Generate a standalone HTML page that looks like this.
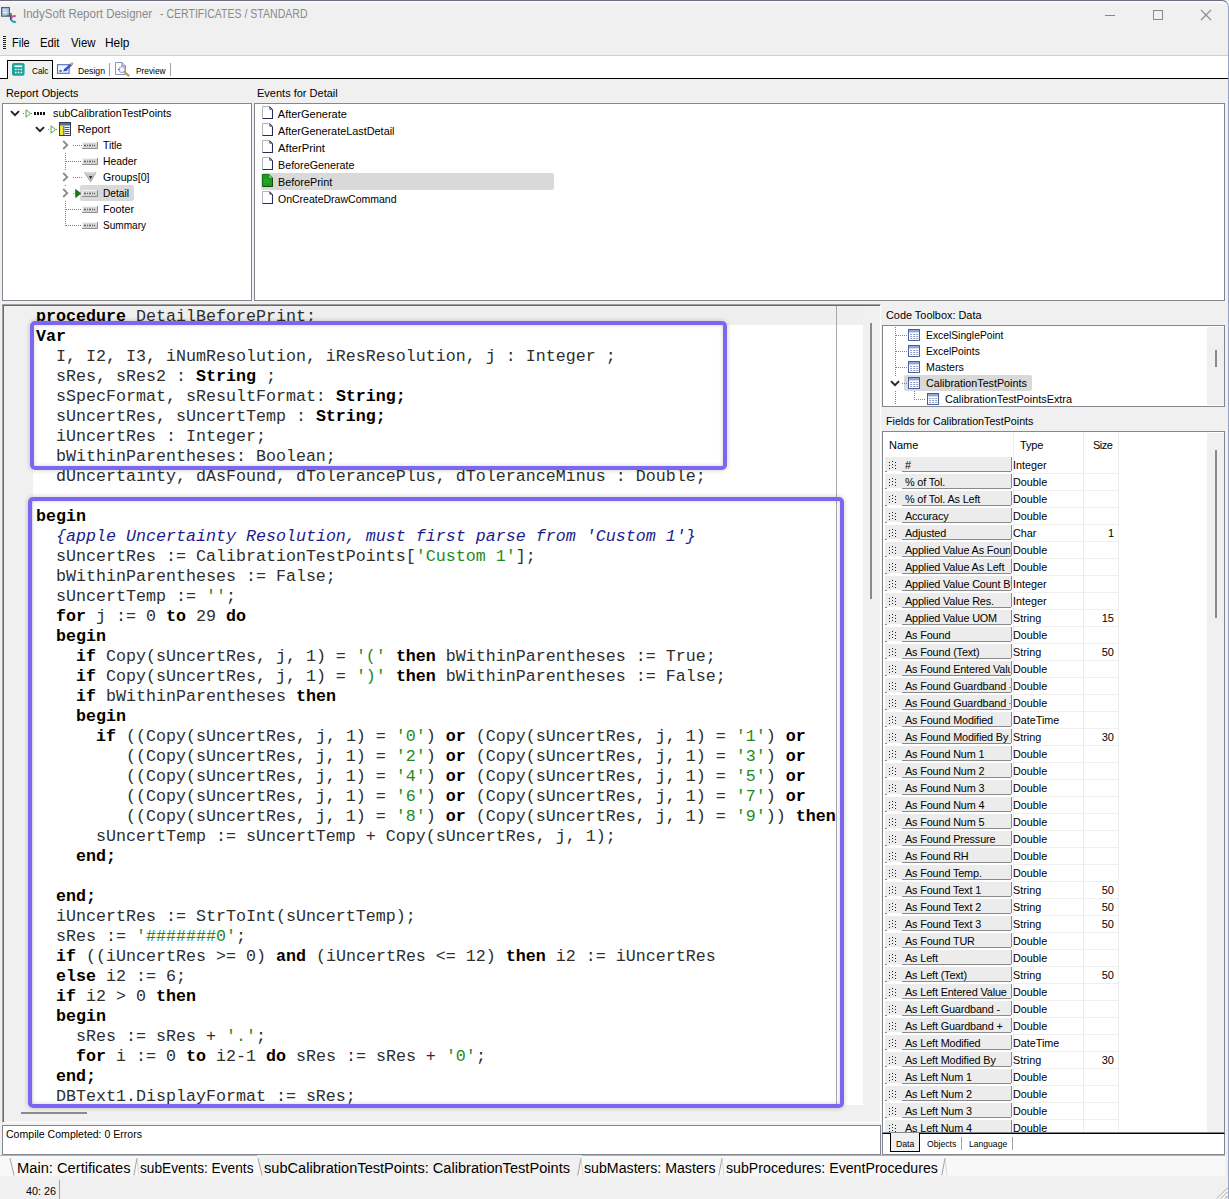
<!DOCTYPE html>
<html><head><meta charset="utf-8"><title>IndySoft Report Designer</title>
<style>
*{box-sizing:border-box;margin:0;padding:0}
html,body{width:1229px;height:1199px;overflow:hidden}
body{background:#f0f0f0;font-family:"Liberation Sans",sans-serif;font-size:11px;color:#000;position:relative}
.abs{position:absolute}
svg{overflow:visible}
.t{position:absolute;white-space:nowrap;line-height:16px;height:16px;transform-origin:0 50%}
.dh{position:absolute;height:1px;background:repeating-linear-gradient(90deg,#808080 0 1px,transparent 1px 2px)}
.dv{position:absolute;width:1px;background:repeating-linear-gradient(#808080 0 1px,transparent 1px 2px)}
#win{left:0;top:0;width:1229px;height:1199px;border-top:1px solid #6e6e80;border-right:1px solid #9aa0bd;border-radius:0 7px 0 0}
#tb{left:0;top:55px;width:1229px;height:24px;background:#fff;border-top:1px solid #cfcfcf;border-bottom:1px solid #000}
.panel{position:absolute;background:#fff;border:1px solid #828790}
#ed{left:2px;top:304px;width:879px;height:819px;background:#f0f0f0;border-top:1px solid #a0a0a0;border-left:1px solid #a0a0a0;border-right:1px solid #fff;border-bottom:1px solid #fff;box-shadow:inset 1px 1px 0 #696969}
#edwhite{left:33px;top:306px;width:830px;height:799px;background:#fff}
#curline{left:33px;top:306px;width:830px;height:19px;background:#efefef}
.cl{position:absolute;left:36px;white-space:pre;font-family:"Liberation Mono",monospace;font-size:16.667px;line-height:20px;height:20px;color:#2e2e2e}
.cl b{color:#000}
.cl .s{color:#1e8a1e}
.cl .c{color:#1c1c8c;font-style:italic}
.box{position:absolute;border:4px solid #7b68ee;border-radius:5px;box-shadow:0 0 5px rgba(0,0,0,.22), inset 0 0 4px rgba(0,0,0,.18)}
.fr{position:absolute;left:0;width:236px;height:17px}
.fr:before{content:"";position:absolute;left:2px;top:0;width:126px;height:14px;background:#ececec;border-right:1px solid #8a8a8a}
.fr:after{content:"";position:absolute;left:0;top:14px;width:236px;height:3px;background:linear-gradient(#8a8a8a,#8a8a8a) 19px 0/109px 1px no-repeat,linear-gradient(#8a8a8a,#8a8a8a) 2px 0/2px 1px no-repeat,linear-gradient(#efefef,#efefef) 130px 2px/105px 1px no-repeat}
.fr span{position:absolute;top:0;height:16px;line-height:16px;white-space:nowrap;overflow:hidden}
.fn{left:22px;width:107px;letter-spacing:-.14px;transform:scaleX(.985);transform-origin:0 50%}
.ft{left:130px;width:68px;transform:scaleX(.98);transform-origin:0 50%}
.fs{left:200px;width:31px;text-align:right}
.grip{position:absolute;left:6px;top:4px}
</style></head><body>
<svg width="0" height="0" style="position:absolute"><defs>
<symbol id="band" viewBox="0 0 16 7"><rect x="0" y="0" width="16" height="7" fill="#d6d6d6"/><path d="M0 6.5H15.5V0" stroke="#8e8e8e" fill="none"/><path d="M0.5 6V0.5H15" stroke="#f4f4f4" fill="none"/><path d="M2 3.5h2m1 0h1m1 0h2m1 0h1m1 0h1" stroke="#5c6e5c" stroke-width="1.4"/></symbol>
<symbol id="page" viewBox="0 0 11 13"><path d="M0.5 0.5H7.6L10.5 3.4V12.5H0.5Z" fill="#fff" stroke="#b4b4bc"/><path d="M0.6 12.5H10.5V3.4" fill="none" stroke="#2a2a55" stroke-width="1.1"/><path d="M7.6 0.5L10.5 3.4M7.8 1V3.2H10" fill="none" stroke="#2a2a55" stroke-width=".9"/></symbol>
<symbol id="pageg" viewBox="0 0 11 13"><path d="M0.5 0.5H7L10.5 4V12.5H0.5Z" fill="#1f9a1f" stroke="#157a15"/><path d="M1 12.5H10.5V4" fill="none" stroke="#0d4d0d"/><path d="M7 0.5V4H10.5Z" fill="#bfe8bf" stroke="#157a15" stroke-width=".6"/><path d="M2 6h5M2 8h6" stroke="#2db52d"/></symbol>
<symbol id="tbl" viewBox="0 0 12 12"><rect x="0.5" y="0.5" width="11" height="11" fill="#fff" stroke="#4a5f9a"/><rect x="1" y="1" width="10" height="2.4" fill="#8ea6d8"/><path d="M2.2 5.5h2m1 0h2m1 0h2M2.2 7.5h2m1 0h2m1 0h2M2.2 9.5h2m1 0h2m1 0h2" stroke="#8e9cc0" stroke-width="1.2"/></symbol>
<symbol id="rpt" viewBox="0 0 12 14"><rect x="0.5" y="0.5" width="11" height="13" fill="#fff" stroke="#2e3a4e"/><rect x="1" y="1" width="10" height="2.6" fill="#4f6f9f"/><rect x="1" y="4" width="3.4" height="9" fill="#f2e436"/><path d="M4.9 4V13" stroke="#2e3a4e"/><path d="M6 5.5h4.5M6 7.5h4.5M6 9.5h4.5M6 11.5h4.5" stroke="#4a5a3a" stroke-width="1"/></symbol>
<symbol id="grip" viewBox="0 0 7 8"><path d="M0 1.5h1M6 1.5h1M3 0.5h1M0 4.5h1M6 4.5h1M3 3.5h1M0 7.5h1M6 7.5h1M3 6.5h1" stroke="#222" stroke-width="1"/></symbol>
<symbol id="chd" viewBox="0 0 10 7"><path d="M1 1.1L5 5.2L9 1.1" fill="none" stroke="#222" stroke-width="1.9"/></symbol>
<symbol id="chr" viewBox="0 0 7 10"><path d="M1.2 1L5.2 5L1.2 9" fill="none" stroke="#8a8a8a" stroke-width="1.8"/></symbol>
<symbol id="tri" viewBox="0 0 7 9"><path d="M1 0.8L5.6 4.5L1 8.2Z" fill="#fff" stroke="#4a9a3a" stroke-width="0.9"/></symbol>
<symbol id="trif" viewBox="0 0 7 9"><path d="M0.5 0.3L6 4.5L0.5 8.7Z" fill="#167a16" stroke="#167a16" stroke-width=".6"/></symbol>
</defs></svg>
<div class="abs" style="left:0;top:1px;width:1228px;height:4px;background:linear-gradient(#fbfbfe,#f0f0f0)"></div>
<svg class="abs" style="left:0;top:5px" width="18" height="20" viewBox="0 0 18 20">
<rect x="1.6" y="2.6" width="7.8" height="8.6" fill="#a9cbea" stroke="#50657c" stroke-width="1.2"/>
<path d="M3 5h3M3 7.5h4" stroke="#e8f2fb" stroke-width="1.2"/>
<path d="M7 10.5h5M10.8 8v5" stroke="#8a5a3c" stroke-width="1.6"/>
<path d="M15.8 11.4A3.6 3.6 0 0 0 11 13.6" fill="none" stroke="#d64aa0" stroke-width="2"/>
<path d="M11 13.6A3.6 3.6 0 0 0 15.9 16.6" fill="none" stroke="#1fa7b8" stroke-width="2"/>
<path d="M10.6 11.5V15" stroke="#3a4a8a" stroke-width="1.4"/>
</svg>
<div class="t" style="left:22.8px;top:5.6px;font-size:12px;transform:scaleX(0.9588);color:#8a8a8a">IndySoft Report Designer</div>
<div class="t" style="left:160px;top:5.6px;font-size:12px;transform:scaleX(0.8779);color:#8a8a8a">- CERTIFICATES / STANDARD</div>
<div class="abs" style="left:1105px;top:15px;width:10px;height:1px;background:#8a8a8a"></div>
<div class="abs" style="left:1153px;top:10px;width:10px;height:10px;border:1px solid #8a8a8a"></div>
<svg class="abs" style="left:1200px;top:9px" width="12" height="12"><path d="M1 1L11 11M11 1L1 11" stroke="#8a8a8a" stroke-width="1.1"/></svg>
<div class="abs" style="left:3px;top:36px;width:3px;height:13px;background:repeating-linear-gradient(#222 0 1px,transparent 1px 2px)"></div>
<div class="t" style="left:12.2px;top:34.6px;font-size:12px;transform:scaleX(0.9150);">File</div>
<div class="t" style="left:40.3px;top:34.6px;font-size:12px;transform:scaleX(0.9426);">Edit</div>
<div class="t" style="left:70.6px;top:34.6px;font-size:12px;transform:scaleX(0.9459);">View</div>
<div class="t" style="left:105.2px;top:34.6px;font-size:12px;transform:scaleX(0.9924);">Help</div>
<div id="tb" class="abs"></div>
<div class="abs" style="left:7px;top:60px;width:46px;height:19px;background:#f0f0f0;border:1px solid #000;border-bottom:none"></div>
<svg class="abs" style="left:12px;top:63px" width="13" height="13" viewBox="0 0 13 13"><rect x="0" y="0" width="12.6" height="12.8" rx="2" fill="#1fa39a"/><rect x="2.4" y="2.4" width="7.8" height="1.7" fill="#e9fbf9"/><path d="M3 6.6h1.6m1.2 0h1.6m1.2 0h1.6M3 9.6h1.6m1.2 0h1.6m1.2 0h1.6" stroke="#e9fbf9" stroke-width="1.5"/></svg>
<div class="t" style="left:31.5px;top:62.6px;font-size:9.5px;transform:scaleX(0.8677);">Calc</div>
<svg class="abs" style="left:56px;top:62px" width="18" height="13" viewBox="0 0 18 13"><rect x="1.5" y="2.7" width="11.6" height="8.6" fill="#f4f7ff" stroke="#4a6ad0" stroke-width="1.1"/><path d="M3.4 8.9h2.4" stroke="#3a55c0" stroke-width="1.7"/><path d="M7 9.6L8.6 6.6L11.6 8.8Z" fill="#2f49b5"/><path d="M16.2 1.6L9.4 7.8" stroke="#3f58b8" stroke-width="2.6"/><path d="M17 0.8L14.8 2.8" stroke="#d8b050" stroke-width="2.2"/></svg>
<div class="t" style="left:78px;top:62.6px;font-size:9.5px;transform:scaleX(0.9128);">Design</div>
<div class="abs" style="left:109px;top:63px;width:1px;height:13px;background:#a0a0a0"></div>
<svg class="abs" style="left:114px;top:61px" width="17" height="16" viewBox="0 0 17 16"><path d="M1.5 1.5H8L11.5 5V13.5H1.5Z" fill="#fff" stroke="#8a94c0"/><path d="M8 1.5V5H11.5" fill="none" stroke="#6a74a8"/><circle cx="8" cy="8.6" r="3" fill="#eef2ff" stroke="#9aa0c8" stroke-width="1"/><path d="M4 8.5h1.4" stroke="#4a4a7a"/><path d="M10.4 11L14.6 14.6" stroke="#b89a5a" stroke-width="2.2" stroke-linecap="round"/></svg>
<div class="t" style="left:135.7px;top:62.6px;font-size:9.5px;transform:scaleX(0.8758);">Preview</div>
<div class="abs" style="left:170px;top:63px;width:1px;height:13px;background:#a0a0a0"></div>
<div class="panel" style="left:2px;top:103px;width:250px;height:198px"></div>
<div class="panel" style="left:254px;top:103px;width:971px;height:198px"></div>
<svg class="abs" style="left:9.5px;top:109.5px" width="10" height="7"><use href="#chd"/></svg>
<div class="dh" style="left:23px;top:113px;width:1px"></div>
<div class="dh" style="left:31px;top:113px;width:1px"></div>
<svg class="abs" style="left:24.5px;top:109px" width="7" height="9"><use href="#tri"/></svg>
<div class="abs" style="left:34px;top:111.5px;width:11px;height:3px;background:repeating-linear-gradient(90deg,#111 0 2px,transparent 2px 3px)"></div>
<div class="t" style="left:52.6px;top:105px;font-size:11px;transform:scaleX(0.9779);">subCalibrationTestPoints</div>
<svg class="abs" style="left:34.5px;top:125.5px" width="10" height="7"><use href="#chd"/></svg>
<div class="dh" style="left:48px;top:129px;width:1px"></div>
<div class="dh" style="left:56px;top:129px;width:1px"></div>
<svg class="abs" style="left:49.5px;top:125px" width="7" height="9"><use href="#tri"/></svg>
<svg class="abs" style="left:59px;top:122px" width="12" height="14"><use href="#rpt"/></svg>
<div class="t" style="left:77.4px;top:121px;font-size:11px;">Report</div>
<div class="dv" style="left:65px;top:153px;height:73px"></div>
<div class="abs" style="left:60px;top:138px;width:12px;height:14px;background:#fff"></div>
<svg class="abs" style="left:61.5px;top:140px" width="7" height="10"><use href="#chr"/></svg>
<div class="dh" style="left:73px;top:145px;width:9px"></div>
<svg class="abs" style="left:82px;top:141.5px" width="16" height="7"><use href="#band"/></svg>
<div class="t" style="left:103px;top:137px;font-size:11px;transform:scaleX(0.9325);">Title</div>
<div class="dh" style="left:66px;top:161px;width:16px"></div>
<svg class="abs" style="left:82px;top:157.5px" width="16" height="7"><use href="#band"/></svg>
<div class="t" style="left:103px;top:153px;font-size:11px;transform:scaleX(0.9424);">Header</div>
<div class="abs" style="left:60px;top:170px;width:12px;height:14px;background:#fff"></div>
<svg class="abs" style="left:61.5px;top:172px" width="7" height="10"><use href="#chr"/></svg>
<div class="dh" style="left:73px;top:177px;width:9px"></div>
<svg class="abs" style="left:84px;top:171.5px" width="13" height="11" viewBox="0 0 13 11"><path d="M0.5 0.5H12L6.6 10Z" fill="#c8c8c8" stroke="#9a9a9a" stroke-width=".8"/><path d="M1 0.8H11.5" stroke="#eee"/><path d="M5 4h3.4L6.6 7.6Z" fill="#333"/></svg>
<div class="t" style="left:103px;top:169px;font-size:11px;transform:scaleX(0.9625);">Groups[0]</div>
<div class="abs" style="left:60px;top:186px;width:12px;height:14px;background:#fff"></div>
<svg class="abs" style="left:61.5px;top:188px" width="7" height="10"><use href="#chr"/></svg>
<div class="abs" style="left:80px;top:185px;width:54px;height:16px;background:#d9d9d9;border-radius:2px"></div>
<div class="dh" style="left:73px;top:193px;width:3px"></div>
<svg class="abs" style="left:74.5px;top:189px" width="7" height="9"><use href="#trif"/></svg>
<svg class="abs" style="left:82px;top:189.5px" width="16" height="7"><use href="#band"/></svg>
<div class="t" style="left:103px;top:185px;font-size:11px;transform:scaleX(0.9244);">Detail</div>
<div class="dh" style="left:66px;top:209px;width:16px"></div>
<svg class="abs" style="left:82px;top:205.5px" width="16" height="7"><use href="#band"/></svg>
<div class="t" style="left:103px;top:201px;font-size:11px;transform:scaleX(0.9749);">Footer</div>
<div class="dh" style="left:66px;top:225px;width:16px"></div>
<svg class="abs" style="left:82px;top:221.5px" width="16" height="7"><use href="#band"/></svg>
<div class="t" style="left:103px;top:217px;font-size:11px;transform:scaleX(0.9137);">Summary</div>
<svg class="abs" style="left:262px;top:106px" width="11" height="13"><use href="#page"/></svg>
<div class="t" style="left:277.8px;top:106px;font-size:11px;">AfterGenerate</div>
<svg class="abs" style="left:262px;top:123px" width="11" height="13"><use href="#page"/></svg>
<div class="t" style="left:277.8px;top:123px;font-size:11px;transform:scaleX(0.9872);">AfterGenerateLastDetail</div>
<svg class="abs" style="left:262px;top:140px" width="11" height="13"><use href="#page"/></svg>
<div class="t" style="left:277.8px;top:140px;font-size:11px;transform:scaleX(1.0227);">AfterPrint</div>
<svg class="abs" style="left:262px;top:157px" width="11" height="13"><use href="#page"/></svg>
<div class="t" style="left:277.8px;top:157px;font-size:11px;transform:scaleX(0.9760);">BeforeGenerate</div>
<div class="abs" style="left:261px;top:173px;width:293px;height:17px;background:#d9d9d9;border-radius:2px"></div>
<svg class="abs" style="left:262px;top:174px" width="11" height="13"><use href="#pageg"/></svg>
<div class="t" style="left:277.8px;top:174px;font-size:11px;transform:scaleX(0.9849);">BeforePrint</div>
<svg class="abs" style="left:262px;top:191px" width="11" height="13"><use href="#page"/></svg>
<div class="t" style="left:277.8px;top:191px;font-size:11px;transform:scaleX(0.9548);">OnCreateDrawCommand</div>
<div id="ed" class="abs"></div>
<div id="edwhite" class="abs"></div>
<div id="curline" class="abs"></div>
<div class="abs" style="left:836px;top:306px;width:1px;height:799px;background:#a8a8a8"></div>
<div id="code">
<div class="cl" style="top:307px"><b>procedure</b> DetailBeforePrint;</div>
<div class="cl" style="top:327px"><b>Var</b></div>
<div class="cl" style="top:347px">  I, I2, I3, iNumResolution, iResResolution, j : Integer ;</div>
<div class="cl" style="top:367px">  sRes, sRes2 : <b>String</b> ;</div>
<div class="cl" style="top:387px">  sSpecFormat, sResultFormat: <b>String;</b></div>
<div class="cl" style="top:407px">  sUncertRes, sUncertTemp : <b>String;</b></div>
<div class="cl" style="top:427px">  iUncertRes : Integer;</div>
<div class="cl" style="top:447px">  bWithinParentheses: Boolean;</div>
<div class="cl" style="top:467px">  dUncertainty, dAsFound, dTolerancePlus, dToleranceMinus : Double;</div>
<div class="cl" style="top:507px"><b>begin</b></div>
<div class="cl" style="top:527px">  <i class="c">{apple Uncertainty Resolution, must first parse from 'Custom 1'}</i></div>
<div class="cl" style="top:547px">  sUncertRes := CalibrationTestPoints[<span class="s">'Custom 1'</span>];</div>
<div class="cl" style="top:567px">  bWithinParentheses := False;</div>
<div class="cl" style="top:587px">  sUncertTemp := <span class="s">''</span>;</div>
<div class="cl" style="top:607px">  <b>for</b> j := 0 <b>to</b> 29 <b>do</b></div>
<div class="cl" style="top:627px">  <b>begin</b></div>
<div class="cl" style="top:647px">    <b>if</b> Copy(sUncertRes, j, 1) = <span class="s">'('</span> <b>then</b> bWithinParentheses := True;</div>
<div class="cl" style="top:667px">    <b>if</b> Copy(sUncertRes, j, 1) = <span class="s">')'</span> <b>then</b> bWithinParentheses := False;</div>
<div class="cl" style="top:687px">    <b>if</b> bWithinParentheses <b>then</b></div>
<div class="cl" style="top:707px">    <b>begin</b></div>
<div class="cl" style="top:727px">      <b>if</b> ((Copy(sUncertRes, j, 1) = <span class="s">'0'</span>) <b>or</b> (Copy(sUncertRes, j, 1) = <span class="s">'1'</span>) <b>or</b></div>
<div class="cl" style="top:747px">         ((Copy(sUncertRes, j, 1) = <span class="s">'2'</span>) <b>or</b> (Copy(sUncertRes, j, 1) = <span class="s">'3'</span>) <b>or</b></div>
<div class="cl" style="top:767px">         ((Copy(sUncertRes, j, 1) = <span class="s">'4'</span>) <b>or</b> (Copy(sUncertRes, j, 1) = <span class="s">'5'</span>) <b>or</b></div>
<div class="cl" style="top:787px">         ((Copy(sUncertRes, j, 1) = <span class="s">'6'</span>) <b>or</b> (Copy(sUncertRes, j, 1) = <span class="s">'7'</span>) <b>or</b></div>
<div class="cl" style="top:807px">         ((Copy(sUncertRes, j, 1) = <span class="s">'8'</span>) <b>or</b> (Copy(sUncertRes, j, 1) = <span class="s">'9'</span>)) <b>then</b></div>
<div class="cl" style="top:827px">      sUncertTemp := sUncertTemp + Copy(sUncertRes, j, 1);</div>
<div class="cl" style="top:847px">    <b>end;</b></div>
<div class="cl" style="top:887px">  <b>end;</b></div>
<div class="cl" style="top:907px">  iUncertRes := StrToInt(sUncertTemp);</div>
<div class="cl" style="top:927px">  sRes := <span class="s">'#######0'</span>;</div>
<div class="cl" style="top:947px">  <b>if</b> ((iUncertRes &gt;= 0) <b>and</b> (iUncertRes &lt;= 12) <b>then</b> i2 := iUncertRes</div>
<div class="cl" style="top:967px">  <b>else</b> i2 := 6;</div>
<div class="cl" style="top:987px">  <b>if</b> i2 &gt; 0 <b>then</b></div>
<div class="cl" style="top:1007px">  <b>begin</b></div>
<div class="cl" style="top:1027px">    sRes := sRes + <span class="s">'.'</span>;</div>
<div class="cl" style="top:1047px">    <b>for</b> i := 0 <b>to</b> i2-1 <b>do</b> sRes := sRes + <span class="s">'0'</span>;</div>
<div class="cl" style="top:1067px">  <b>end;</b></div>
<div class="cl" style="top:1087px">  DBText1.DisplayFormat := sRes;</div>
</div>
<div class="box" style="left:30px;top:321px;width:697px;height:149px"></div>
<div class="box" style="left:28px;top:497px;width:816px;height:611px"></div>
<div class="abs" style="left:21px;top:1112px;width:66px;height:2px;background:#8a8a8a"></div>
<div class="abs" style="left:870px;top:323px;width:2px;height:276px;background:#8a8a8a"></div>
<div class="panel" style="left:2px;top:1125px;width:879px;height:30px"></div>
<div class="panel" style="left:882px;top:325px;width:343px;height:82px"></div>
<div class="abs" style="left:1207px;top:327px;width:17px;height:78px;background:#f0f0f0"></div>
<div class="abs" style="left:1215px;top:350px;width:2px;height:17px;background:#8a8a8a"></div>
<div class="dv" style="left:895px;top:327px;height:78px"></div>
<div class="dh" style="left:896px;top:335px;width:11px"></div>
<svg class="abs" style="left:908px;top:329px" width="12" height="12"><use href="#tbl"/></svg>
<div class="t" style="left:926.4px;top:327px;font-size:11px;transform:scaleX(0.9375);">ExcelSinglePoint</div>
<div class="dh" style="left:896px;top:351px;width:11px"></div>
<svg class="abs" style="left:908px;top:345px" width="12" height="12"><use href="#tbl"/></svg>
<div class="t" style="left:926.4px;top:343px;font-size:11px;transform:scaleX(0.9359);">ExcelPoints</div>
<div class="dh" style="left:896px;top:367px;width:11px"></div>
<svg class="abs" style="left:908px;top:361px" width="12" height="12"><use href="#tbl"/></svg>
<div class="t" style="left:926.4px;top:359px;font-size:11px;transform:scaleX(0.9687);">Masters</div>
<div class="abs" style="left:888px;top:376px;width:14px;height:14px;background:#fff"></div>
<svg class="abs" style="left:889.5px;top:379.5px" width="10" height="7"><use href="#chd"/></svg>
<div class="abs" style="left:904px;top:375px;width:128px;height:16px;background:#d9d9d9;border-radius:2px"></div>
<div class="dh" style="left:902px;top:383px;width:5px"></div>
<svg class="abs" style="left:908px;top:377px" width="12" height="12"><use href="#tbl"/></svg>
<div class="t" style="left:926.4px;top:375px;font-size:11px;transform:scaleX(0.9754);">CalibrationTestPoints</div>
<div class="dv" style="left:914px;top:391px;height:8px"></div>
<div class="dh" style="left:914px;top:399px;width:12px"></div>
<svg class="abs" style="left:927px;top:393px" width="12" height="12"><use href="#tbl"/></svg>
<div class="t" style="left:945.4px;top:391px;font-size:11px;transform:scaleX(0.9844);">CalibrationTestPointsExtra</div>
<div class="panel" id="fl" style="left:882px;top:431px;width:343px;height:702px;overflow:hidden">
<span class="t" style="left:6px;top:5px">Name</span><span class="t" style="left:137px;top:5px;letter-spacing:-.2px">Type</span><span class="t" style="left:210px;top:5px;letter-spacing:-.5px">Size</span>
<div class="abs" style="left:130px;top:0;width:1px;height:701px;background:#ececec"></div><div class="abs" style="left:200px;top:0;width:1px;height:701px;background:#ececec"></div><div class="abs" style="left:235px;top:0;width:1px;height:701px;background:#ececec"></div>
<div class="fr" style="top:25px"><svg class="grip" width="7" height="8"><use href="#grip"/></svg><span class="fn">#</span><span class="ft">Integer</span><span class="fs"></span></div>
<div class="fr" style="top:42px"><svg class="grip" width="7" height="8"><use href="#grip"/></svg><span class="fn">% of Tol.</span><span class="ft">Double</span><span class="fs"></span></div>
<div class="fr" style="top:59px"><svg class="grip" width="7" height="8"><use href="#grip"/></svg><span class="fn">% of Tol. As Left</span><span class="ft">Double</span><span class="fs"></span></div>
<div class="fr" style="top:76px"><svg class="grip" width="7" height="8"><use href="#grip"/></svg><span class="fn">Accuracy</span><span class="ft">Double</span><span class="fs"></span></div>
<div class="fr" style="top:93px"><svg class="grip" width="7" height="8"><use href="#grip"/></svg><span class="fn">Adjusted</span><span class="ft">Char</span><span class="fs">1</span></div>
<div class="fr" style="top:110px"><svg class="grip" width="7" height="8"><use href="#grip"/></svg><span class="fn">Applied Value As Found</span><span class="ft">Double</span><span class="fs"></span></div>
<div class="fr" style="top:127px"><svg class="grip" width="7" height="8"><use href="#grip"/></svg><span class="fn">Applied Value As Left</span><span class="ft">Double</span><span class="fs"></span></div>
<div class="fr" style="top:144px"><svg class="grip" width="7" height="8"><use href="#grip"/></svg><span class="fn">Applied Value Count By</span><span class="ft">Integer</span><span class="fs"></span></div>
<div class="fr" style="top:161px"><svg class="grip" width="7" height="8"><use href="#grip"/></svg><span class="fn">Applied Value Res.</span><span class="ft">Integer</span><span class="fs"></span></div>
<div class="fr" style="top:178px"><svg class="grip" width="7" height="8"><use href="#grip"/></svg><span class="fn">Applied Value UOM</span><span class="ft">String</span><span class="fs">15</span></div>
<div class="fr" style="top:195px"><svg class="grip" width="7" height="8"><use href="#grip"/></svg><span class="fn">As Found</span><span class="ft">Double</span><span class="fs"></span></div>
<div class="fr" style="top:212px"><svg class="grip" width="7" height="8"><use href="#grip"/></svg><span class="fn">As Found (Text)</span><span class="ft">String</span><span class="fs">50</span></div>
<div class="fr" style="top:229px"><svg class="grip" width="7" height="8"><use href="#grip"/></svg><span class="fn">As Found Entered Value</span><span class="ft">Double</span><span class="fs"></span></div>
<div class="fr" style="top:246px"><svg class="grip" width="7" height="8"><use href="#grip"/></svg><span class="fn">As Found Guardband -</span><span class="ft">Double</span><span class="fs"></span></div>
<div class="fr" style="top:263px"><svg class="grip" width="7" height="8"><use href="#grip"/></svg><span class="fn">As Found Guardband +</span><span class="ft">Double</span><span class="fs"></span></div>
<div class="fr" style="top:280px"><svg class="grip" width="7" height="8"><use href="#grip"/></svg><span class="fn">As Found Modified</span><span class="ft">DateTime</span><span class="fs"></span></div>
<div class="fr" style="top:297px"><svg class="grip" width="7" height="8"><use href="#grip"/></svg><span class="fn">As Found Modified By</span><span class="ft">String</span><span class="fs">30</span></div>
<div class="fr" style="top:314px"><svg class="grip" width="7" height="8"><use href="#grip"/></svg><span class="fn">As Found Num 1</span><span class="ft">Double</span><span class="fs"></span></div>
<div class="fr" style="top:331px"><svg class="grip" width="7" height="8"><use href="#grip"/></svg><span class="fn">As Found Num 2</span><span class="ft">Double</span><span class="fs"></span></div>
<div class="fr" style="top:348px"><svg class="grip" width="7" height="8"><use href="#grip"/></svg><span class="fn">As Found Num 3</span><span class="ft">Double</span><span class="fs"></span></div>
<div class="fr" style="top:365px"><svg class="grip" width="7" height="8"><use href="#grip"/></svg><span class="fn">As Found Num 4</span><span class="ft">Double</span><span class="fs"></span></div>
<div class="fr" style="top:382px"><svg class="grip" width="7" height="8"><use href="#grip"/></svg><span class="fn">As Found Num 5</span><span class="ft">Double</span><span class="fs"></span></div>
<div class="fr" style="top:399px"><svg class="grip" width="7" height="8"><use href="#grip"/></svg><span class="fn">As Found Pressure</span><span class="ft">Double</span><span class="fs"></span></div>
<div class="fr" style="top:416px"><svg class="grip" width="7" height="8"><use href="#grip"/></svg><span class="fn">As Found RH</span><span class="ft">Double</span><span class="fs"></span></div>
<div class="fr" style="top:433px"><svg class="grip" width="7" height="8"><use href="#grip"/></svg><span class="fn">As Found Temp.</span><span class="ft">Double</span><span class="fs"></span></div>
<div class="fr" style="top:450px"><svg class="grip" width="7" height="8"><use href="#grip"/></svg><span class="fn">As Found Text 1</span><span class="ft">String</span><span class="fs">50</span></div>
<div class="fr" style="top:467px"><svg class="grip" width="7" height="8"><use href="#grip"/></svg><span class="fn">As Found Text 2</span><span class="ft">String</span><span class="fs">50</span></div>
<div class="fr" style="top:484px"><svg class="grip" width="7" height="8"><use href="#grip"/></svg><span class="fn">As Found Text 3</span><span class="ft">String</span><span class="fs">50</span></div>
<div class="fr" style="top:501px"><svg class="grip" width="7" height="8"><use href="#grip"/></svg><span class="fn">As Found TUR</span><span class="ft">Double</span><span class="fs"></span></div>
<div class="fr" style="top:518px"><svg class="grip" width="7" height="8"><use href="#grip"/></svg><span class="fn">As Left</span><span class="ft">Double</span><span class="fs"></span></div>
<div class="fr" style="top:535px"><svg class="grip" width="7" height="8"><use href="#grip"/></svg><span class="fn">As Left (Text)</span><span class="ft">String</span><span class="fs">50</span></div>
<div class="fr" style="top:552px"><svg class="grip" width="7" height="8"><use href="#grip"/></svg><span class="fn">As Left Entered Value</span><span class="ft">Double</span><span class="fs"></span></div>
<div class="fr" style="top:569px"><svg class="grip" width="7" height="8"><use href="#grip"/></svg><span class="fn">As Left Guardband -</span><span class="ft">Double</span><span class="fs"></span></div>
<div class="fr" style="top:586px"><svg class="grip" width="7" height="8"><use href="#grip"/></svg><span class="fn">As Left Guardband +</span><span class="ft">Double</span><span class="fs"></span></div>
<div class="fr" style="top:603px"><svg class="grip" width="7" height="8"><use href="#grip"/></svg><span class="fn">As Left Modified</span><span class="ft">DateTime</span><span class="fs"></span></div>
<div class="fr" style="top:620px"><svg class="grip" width="7" height="8"><use href="#grip"/></svg><span class="fn">As Left Modified By</span><span class="ft">String</span><span class="fs">30</span></div>
<div class="fr" style="top:637px"><svg class="grip" width="7" height="8"><use href="#grip"/></svg><span class="fn">As Left Num 1</span><span class="ft">Double</span><span class="fs"></span></div>
<div class="fr" style="top:654px"><svg class="grip" width="7" height="8"><use href="#grip"/></svg><span class="fn">As Left Num 2</span><span class="ft">Double</span><span class="fs"></span></div>
<div class="fr" style="top:671px"><svg class="grip" width="7" height="8"><use href="#grip"/></svg><span class="fn">As Left Num 3</span><span class="ft">Double</span><span class="fs"></span></div>
<div class="fr" style="top:688px"><svg class="grip" width="7" height="8"><use href="#grip"/></svg><span class="fn">As Left Num 4</span><span class="ft">Double</span><span class="fs"></span></div>
<div class="abs" style="left:324px;top:1px;width:17px;height:700px;background:#f0f0f0"></div>
<div class="abs" style="left:332px;top:18px;width:2px;height:168px;background:#8a8a8a"></div>
</div>
<div class="abs" style="left:882px;top:1133px;width:343px;height:22px;background:#fff;border:1px solid #828790;border-top:1px solid #000"></div>
<div class="abs" style="left:890px;top:1133px;width:30px;height:19px;background:#f0f0f0;border:1px solid #000;border-top:none"></div>
<div class="t" style="left:896.4px;top:1135.6px;font-size:9.5px;transform:scaleX(0.9114);">Data</div>
<div class="t" style="left:927.3px;top:1135.6px;font-size:9.5px;transform:scaleX(0.9094);">Objects</div>
<div class="abs" style="left:961px;top:1137px;width:1px;height:13px;background:#a0a0a0"></div>
<div class="t" style="left:969.3px;top:1135.6px;font-size:9.5px;transform:scaleX(0.9035);">Language</div>
<div class="abs" style="left:1012px;top:1137px;width:1px;height:13px;background:#a0a0a0"></div>
<div class="abs" style="left:0;top:1155px;width:1225px;height:21px;background:#f8f8f8;border-top:1px solid #b4b4b4"></div>
<div class="abs" style="left:257px;top:1155px;width:325px;height:21px;background:#f0f0f0;clip-path:polygon(0 0,100% 0,321px 100%,4px 100%)"></div>
<svg class="abs" style="left:1216px;top:1187px" width="12" height="12"><path d="M11.5 1L1 11.5M11.5 5L5 11.5M11.5 9L9 11.5" stroke="#9a9a9a" stroke-width="1"/><path d="M11.5 2.2L2.2 11.5M11.5 6.2L6.2 11.5" stroke="#fff" stroke-width="1"/></svg>
<svg class="abs" style="left:8.5px;top:1157px" width="7" height="19"><path d="M1 1L5 18.5" stroke="#9a9a9a" stroke-width=".9" fill="none"/></svg>
<div class="t" style="left:16.5px;top:1160px;font-size:14px;transform:scaleX(1.0494);">Main: Certificates</div>
<svg class="abs" style="left:132.5px;top:1157px" width="7" height="19"><path d="M0.8 18.5L4 1" stroke="#9a9a9a" stroke-width=".9" fill="none"/><path d="M4 1L6 18.5" stroke="#d2d2d2" stroke-width=".8" fill="none"/></svg>
<div class="t" style="left:140.3px;top:1160px;font-size:14px;transform:scaleX(0.9788);">subEvents: Events</div>
<svg class="abs" style="left:256.5px;top:1157px" width="7" height="19"><path d="M1 1L5 18.5" stroke="#9a9a9a" stroke-width=".9" fill="none"/></svg>
<div class="t" style="left:264px;top:1160px;font-size:14px;transform:scaleX(1.0430);">subCalibrationTestPoints: CalibrationTestPoints</div>
<svg class="abs" style="left:576.5px;top:1157px" width="7" height="19"><path d="M0.8 18.5L4 1" stroke="#9a9a9a" stroke-width=".9" fill="none"/><path d="M4 1L6 18.5" stroke="#d2d2d2" stroke-width=".8" fill="none"/></svg>
<div class="t" style="left:584.4px;top:1160px;font-size:14px;transform:scaleX(1.0128);">subMasters: Masters</div>
<svg class="abs" style="left:717.5px;top:1157px" width="7" height="19"><path d="M0.8 18.5L4 1" stroke="#9a9a9a" stroke-width=".9" fill="none"/><path d="M4 1L6 18.5" stroke="#d2d2d2" stroke-width=".8" fill="none"/></svg>
<div class="t" style="left:726.3px;top:1160px;font-size:14px;transform:scaleX(1.0122);">subProcedures: EventProcedures</div>
<svg class="abs" style="left:940.5px;top:1157px" width="7" height="19"><path d="M0.8 18.5L4 1" stroke="#9a9a9a" stroke-width=".9" fill="none"/><path d="M4 1L6 18.5" stroke="#d2d2d2" stroke-width=".8" fill="none"/></svg>
<div class="t" style="left:5.5px;top:85px;font-size:11px;transform:scaleX(0.9881);">Report Objects</div>
<div class="t" style="left:257px;top:85px;font-size:11px;">Events for Detail</div>
<div class="t" style="left:6px;top:1125.6px;font-size:11px;transform:scaleX(0.9588);">Compile Completed: 0 Errors</div>
<div class="t" style="left:885.5px;top:307px;font-size:11px;transform:scaleX(0.9904);">Code Toolbox: Data</div>
<div class="t" style="left:885.5px;top:413px;font-size:11px;transform:scaleX(0.9721);">Fields for CalibrationTestPoints</div>
<div class="t" style="left:26px;top:1183px;font-size:11px;transform:scaleX(0.9806);">40: 26</div>
<div class="abs" style="left:59px;top:1180px;width:1px;height:19px;background:#a0a0a0"></div>
<div id="win" class="abs"></div>
</body></html>
